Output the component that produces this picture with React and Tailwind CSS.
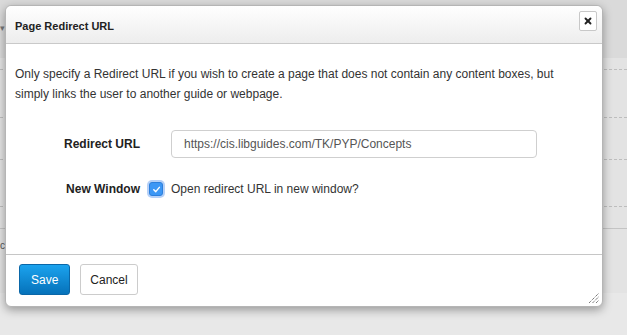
import { X } from "lucide-react";

const font = { fontFamily: '"Liberation Sans", Arial, sans-serif' };

const Backdrop = () => (
  <div className="flex flex-col h-full">
    <div className="h-[58px] bg-[#dadada] relative">
      <span className="absolute left-0 top-[24px] text-[9px] leading-none text-[#777]">▾</span>
    </div>
    <div className="h-[12px] border-b border-dashed border-[#bdbdbd]" />
    <div className="h-[48px] border-b border-dashed border-[#bdbdbd]" />
    <div className="h-[42px] border-b border-dashed border-[#bdbdbd]" />
    <div className="h-[47px] border-b border-dashed border-[#bdbdbd]" />
    <div className="h-[22px] border-b border-[#c4c4c4]" />
    <div className="h-[64px] relative">
      <span className="absolute left-0 top-[12px] text-[10px] leading-none text-[#555]">c</span>
    </div>
    <div className="flex-1 bg-[#e8e8e8]" />
  </div>
);

const ResizeGrip = () => (
  <svg width="11" height="11" viewBox="0 0 11 11" className="absolute right-[3px] bottom-[3px]">
    <g stroke="#444" strokeWidth="1" strokeDasharray="1 1">
      <line x1="1" y1="11" x2="11" y2="1" />
      <line x1="4.5" y1="11" x2="11" y2="4.5" />
      <line x1="8" y1="11" x2="11" y2="8" />
    </g>
  </svg>
);

export default function App() {
  return (
    <div className="relative w-[627px] h-[335px] overflow-hidden bg-[#e3e3e3]" style={font}>
      <Backdrop />

      {/* dialog */}
      <div className="absolute left-[5px] top-[5px] w-[598px] h-[302px] flex flex-col bg-white rounded-[6px] border border-[#b5b5b5] shadow-[0_3px_10px_rgba(0,0,0,0.35)]">
        <div className="h-[38px] shrink-0 flex items-start justify-between pl-[9px] pr-[5px] rounded-t-[6px] bg-gradient-to-b from-white to-[#ededed] border-b border-[#c9c9c9]">
          <span className="mt-[12px] text-[11px] font-bold text-[#222]">Page Redirect URL</span>
          <button className="mt-[5px] w-[18px] h-[20px] flex items-center justify-center bg-white border border-[#c8c8c8] rounded-[2px]">
            <X size={10} strokeWidth={4.5} color="#222" />
          </button>
        </div>

        <div className="flex-1 px-[9px] pt-[20px] text-[12px] text-[#333]">
          <p className="leading-[20px]">
            Only specify a Redirect URL if you wish to create a page that does not contain any content boxes, but
            <br />
            simply links the user to another guide or webpage.
          </p>

          <div className="mt-[26px] flex items-center">
            <label className="w-[125px] text-right font-bold text-[#222]">Redirect URL</label>
            <div className="ml-[31px] w-[366px] h-[28px] flex items-center px-[12px] border border-[#cfcfcf] rounded-[4px] text-[#555]">
              https://cis.libguides.com/TK/PYP/Concepts
            </div>
          </div>

          <div className="mt-[22px] flex items-center">
            <label className="w-[125px] text-right font-bold text-[#222]">New Window</label>
            <span className="ml-[9px] w-[14px] h-[14px] flex items-center justify-center rounded-[3px] bg-[#3c97f5] border border-[#2c7fdc] shadow-[0_0_0_2px_rgba(120,170,240,0.55)]">
              <svg width="9" height="9" viewBox="0 0 10 10">
                <path d="M2 5.2 L4.2 7.4 L8.2 2.6" fill="none" stroke="white" strokeWidth="1.6" strokeLinecap="round" strokeLinejoin="round" />
              </svg>
            </span>
            <span className="ml-[8px]">Open redirect URL in new window?</span>
          </div>
        </div>

        <div className="relative h-[52px] shrink-0 border-t border-[#c6c6c6] flex items-start gap-[10px] pl-[13px] pt-[9px]">
          <button className="h-[31px] px-[11px] rounded-[3px] text-[12px] text-white border border-[#0a67a8] bg-gradient-to-b from-[#1ba3ee] to-[#0672ba]">
            Save
          </button>
          <button className="h-[31px] px-[9px] rounded-[3px] text-[12px] text-[#222] bg-white border border-[#cccccc]">
            Cancel
          </button>
          <ResizeGrip />
        </div>
      </div>
    </div>
  );
}
